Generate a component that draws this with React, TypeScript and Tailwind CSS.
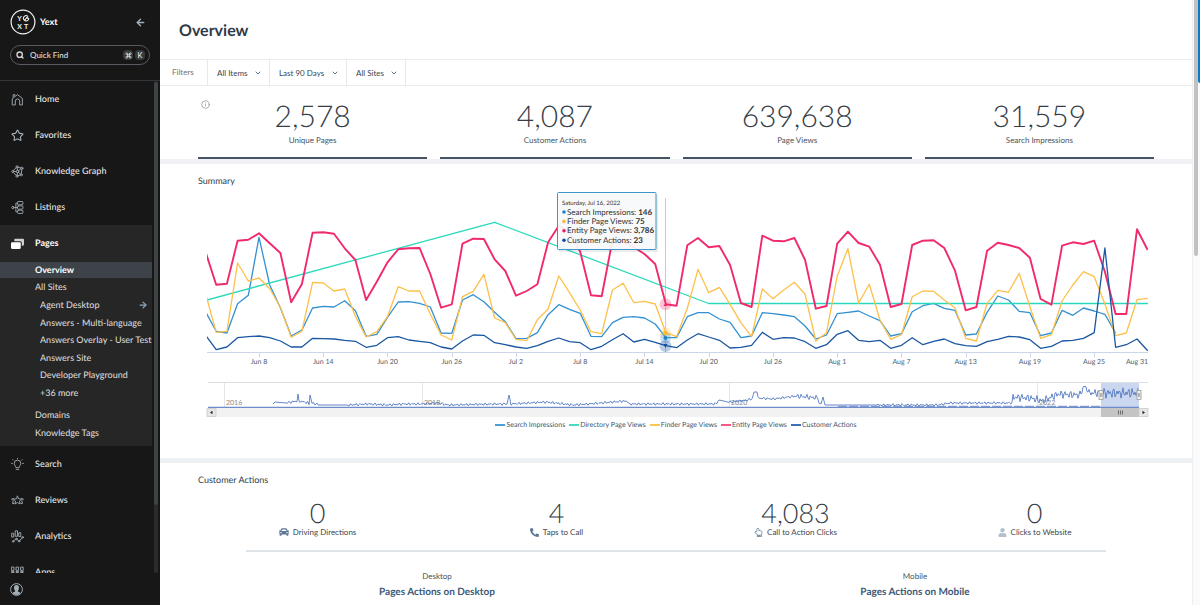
import type { ReactNode } from "react";
import {
  ArrowLeft,
  ArrowRight,
  ChevronDown,
  Command,
  Info,
  Search,
  Star,
} from "lucide-react";
import { FaCar, FaPhoneAlt, FaRegHandPointUp, FaUser } from "react-icons/fa";

const STEP = 10.707;
const START_X = 7.5;

// Values are distances from the top of the plot, in thirds of a unit
const entityViews = [
  245, 344, 341, 212, 209, 190, 220, 249, 397, 342, 188, 187, 191, 235, 270,
  390, 335, 277, 238, 235, 234, 312, 413, 403, 221, 206, 207, 268, 303, 377,
  363, 343, 217, 167, 185, 245, 376, 379, 212, 215, 232, 252, 282, 403, 407,
  226, 204, 232, 228, 285, 399, 411, 197, 212, 214, 204, 270, 416, 408, 221,
  185, 219, 230, 284, 411, 402, 225, 212, 211, 234, 302, 421, 411, 242, 218,
  225, 234, 263, 387, 404, 227, 217, 222, 212, 305, 432, 432, 178, 240,
];

const searchImpressions = [
  425, 484, 489, 401, 376, 202, 345, 413, 498, 480, 414, 409, 411, 392, 422,
  499, 493, 442, 396, 395, 400, 411, 489, 490, 390, 374, 395, 427, 455, 506,
  505, 488, 434, 404, 418, 430, 499, 500, 458, 442, 440, 444, 462, 503, 503,
  440, 428, 428, 447, 457, 503, 498, 428, 431, 435, 440, 468, 507, 495, 431,
  427, 423, 438, 452, 498, 491, 425, 407, 400, 415, 421, 495, 492, 427, 378,
  390, 424, 428, 497, 489, 421, 436, 414, 423, 433, 490,
];

const finderViews = [
  370, 487, 484, 279, 333, 324, 356, 412, 502, 484, 337, 339, 363, 357, 439,
  501, 485, 440, 350, 363, 363, 432, 495, 510, 380, 364, 313, 444, 458, 508,
  512, 449, 417, 318, 368, 420, 485, 491, 360, 340, 398, 394, 402, 488, 500,
  415, 298, 368, 352, 403, 458, 500, 357, 386, 360, 337, 373, 513, 488, 318,
  236, 399, 343, 450, 508, 494, 380, 363, 364, 390, 413, 505, 513, 400, 361,
  367, 310, 410, 505, 494, 393, 345, 305, 320, 402, 497, 489, 389, 385,
];

const customerActions = [
  495, 539, 531, 503, 500, 498, 503, 513, 531, 531, 505, 506, 507, 511, 514,
  532, 526, 503, 500, 510, 514, 518, 531, 537, 513, 495, 496, 518, 524, 531,
  535, 527, 514, 504, 515, 518, 539, 529, 509, 491, 516, 508, 517, 527, 533,
  510, 491, 501, 511, 534, 532, 526, 487, 508, 503, 504, 515, 535, 524, 493,
  482, 511, 515, 511, 535, 526, 503, 524, 514, 507, 521, 527, 529, 515, 508,
  499, 501, 509, 535, 529, 513, 511, 505, 488, 234, 532, 524, 507, 542,
];

const ticks = [
  "Jun 8", "Jun 14", "Jun 20", "Jun 26", "Jul 2", "Jul 8", "Jul 14",
  "Jul 20", "Jul 26", "Aug 1", "Aug 7", "Aug 13", "Aug 19", "Aug 25",
];

const legend = [
  { label: "Search Impressions", color: "bg-[#4a9fd8]" },
  { label: "Directory Page Views", color: "bg-[#4adcc0]" },
  { label: "Finder Page Views", color: "bg-[#fdc758]" },
  { label: "Entity Page Views", color: "bg-[#f5588a]" },
  { label: "Customer Actions", color: "bg-[#3a72b5]" },
];

const tooltipRows = [
  { label: "Search Impressions:", value: "146", color: "#1c83cf" },
  { label: "Finder Page Views:", value: "75", color: "#fdb92f" },
  { label: "Entity Page Views:", value: "3,786", color: "#f01f64" },
  { label: "Customer Actions:", value: "23", color: "#0f4fa0" },
];

const toPoints = (values: number[]) =>
  values
    .map((v, i) => `${(START_X + i * STEP).toFixed(1)},${(v / 3 - 20).toFixed(1)}`)
    .join(" ");

// [x, height above the baseline, jitter]
const history: [number, number, number][] = [
  [75, 2, 0], [77, 4, 0], [88, 3, 1], [99, 5, 1], [100, 12, 0], [101, 5, 1],
  [111, 3, 2], [112, 11, 0], [114, 3, 1], [122, 1, 0], [150, 1, 1],
  [170, 2, 1], [190, 1, 1], [205, 2, 1], [222, 2, 1], [240, 3, 1],
  [250, 1, 1], [300, 2, 1], [309, 2, 0], [311, 11, 0], [313, 2, 1],
  [348, 4, 1], [375, 1, 1], [390, 2, 1], [428, 5, 0], [432, 2, 1],
  [500, 2, 1], [518, 2, 1], [521, 6, 0], [530, 4, 1], [543, 5, 1],
  [554, 7, 1], [556, 14, 0], [559, 14, 0], [560, 8, 1], [575, 7, 1],
  [598, 10, 2], [620, 8, 1], [621, 3, 0], [623, 2, 0], [625, 9, 0],
  [627, 1, 0], [680, 1, 1], [740, 1, 1], [752, 3, 1], [780, 3, 1],
  [814, 3, 1], [815, 9, 3], [832, 8, 3], [845, 5, 3], [860, 12, 3],
  [882, 11, 3], [886, 20, 2], [892, 13, 3], [903, 13, 4], [941, 13, 4],
];

function historyPoints() {
  const points: string[] = [];
  let n = 0;
  for (let s = 0; s < history.length - 1; s++) {
    const [x0, h0, j0] = history[s];
    const [x1, h1] = history[s + 1];
    for (let x = x0; x < x1; x += 1) {
      const t = (x - x0) / (x1 - x0);
      const jitter = Math.sin(n * 2.05) * 0.8 + Math.sin(n * 1.31) * 0.6;
      const y = 216 - (h0 + (h1 - h0) * t) - jitter * j0;
      points.push(`${x},${Math.min(216, y).toFixed(1)}`);
      n++;
    }
  }
  return points.join(" ");
}

function NavIcon({ children }: { children: ReactNode }) {
  return (
    <svg
      viewBox="0 0 24 24"
      className="size-[13px] shrink-0 text-[#9aa3ab]"
      fill="none"
      stroke="currentColor"
      strokeWidth="1.8"
      strokeLinejoin="round"
      strokeLinecap="round"
      aria-hidden="true"
    >
      {children}
    </svg>
  );
}

function NavItem({ icon, label, active = false }: { icon: ReactNode; label: string; active?: boolean }) {
  return (
    <a
      href="#"
      className={`flex h-9 shrink-0 items-center gap-[11px] pl-[11px] text-[9px] ${
        active ? "font-bold text-white" : "font-semibold text-[#dedede]"
      }`}
    >
      {icon}
      {label}
    </a>
  );
}

function YextLogo() {
  return (
    <svg viewBox="0 0 26 26" className="size-[26px]" aria-label="Yext" role="img">
      <circle cx="13" cy="13" r="11.9" fill="none" stroke="#f2f2f2" strokeWidth="1.2" />
      <g fill="#f2f2f2" fontSize="7" fontWeight="700" textAnchor="middle">
        <text x="9.6" y="12">Y</text>
        <text x="16" y="19.500">T</text>
        <text x="9.6" y="19.500">X</text>
      </g>
      <path d="M14.300 11.300 18 7.400M18.800 9.300A2.700 2.700 0 1 1 17.600 7M18.800 9.300h-2" fill="none" stroke="#f2f2f2" strokeWidth="1.1" />
    </svg>
  );
}

function Sidebar() {
  return (
    <aside className="flex h-full w-40 shrink-0 flex-col bg-[#171717] text-[#d6d6d6]">
      <div className="flex h-[81px] shrink-0 flex-col border-b border-[#333638] px-[10px] pt-[9px]">
        <div className="flex items-center">
          <YextLogo />
          <span className="ml-1 text-[9px] font-bold text-white">Yext</span>
          <button type="button" aria-label="Collapse menu" className="mr-1 ml-auto text-[#9fb0bf]">
            <ArrowLeft size={11} strokeWidth={3} />
          </button>
        </div>
        <button
          type="button"
          className="mt-[10px] flex h-5 items-center rounded-full border border-[#565c61] pr-1 pl-[5px] text-[8px] font-semibold"
        >
          <Search size={8} strokeWidth={4} />
          <span className="ml-[6px]">Quick Find</span>
          <span className="ml-auto flex gap-[2px]">
            <kbd className="flex size-[10px] items-center justify-center rounded-sm bg-[#383a3c]">
              <Command size={7} strokeWidth={3} />
            </kbd>
            <kbd className="flex size-[10px] items-center justify-center rounded-sm bg-[#383a3c] font-[Lato] text-[7px] font-bold">
              K
            </kbd>
          </span>
        </button>
      </div>

      <div className="flex min-h-0 flex-1">
        <nav className="flex min-w-0 flex-1 flex-col overflow-hidden">
          <NavItem
            label="Home"
            icon={
              <NavIcon>
                <path d="M3 10 12 3l9 7v12h-5v-7a4 4 0 0 0-8 0v7H3zM4 8V3h3v2" />
              </NavIcon>
            }
          />
          <NavItem
            label="Favorites"
            icon={<Star className="size-[13px] shrink-0 text-[#a9b2ba]" strokeWidth={2} />}
          />
          <NavItem
            label="Knowledge Graph"
            icon={
              <NavIcon>
                <circle cx="3.5" cy="12" r="2" />
                <circle cx="12" cy="12" r="2.4" />
                <circle cx="11" cy="3.5" r="2" />
                <circle cx="20" cy="6" r="2" />
                <circle cx="19" cy="18" r="2" />
                <circle cx="11" cy="20.5" r="2" />
                <path d="M5.5 12h4M11.5 5.500 12 9.500M14 10.500 18 7M14 13.500 17.500 17M12 14.500 11.500 18.500M13 4l5 1.500M20 8l-1 8M17 18.500l-4 1.500M4.500 10 9.500 5M4.500 14l5 5" />
              </NavIcon>
            }
          />
          <NavItem
            label="Listings"
            icon={
              <NavIcon>
                <circle cx="3.500" cy="12" r="2.200" />
                <rect x="12" y="1" width="10" height="6" rx="1.500" />
                <rect x="12" y="9" width="10" height="6" rx="1.500" />
                <rect x="12" y="17" width="10" height="6" rx="1.500" />
                <path d="M6 12h6M12 4H9v16h3" />
              </NavIcon>
            }
          />

          <div className="h-[221px] shrink-0 bg-[#262626]">
            <NavItem
              label="Pages"
              active
              icon={
                <svg viewBox="0 0 24 24" className="size-[13px] shrink-0" aria-hidden="true">
                  <path d="M8 3h14a2 2 0 0 1 2 2v9a2 2 0 0 1-2 2h-2v-5a3 3 0 0 0-3-3H6V5a2 2 0 0 1 2-2z" fill="#cfcfcf" />
                  <rect x="0" y="9.500" width="18" height="12.500" rx="2" fill="#fff" />
                </svg>
              }
            />
            <div className="pt-px text-[9px] font-medium">
              <a href="#" className="flex h-4 items-center bg-[#3d4349] pl-[35px] font-bold text-white">
                Overview
              </a>
              <a href="#" className="flex h-[18px] items-center pl-[35px]">
                All Sites
              </a>
              <ul className="grid h-[105px] auto-rows-fr whitespace-nowrap">
                <li className="flex items-center justify-between pr-1 pl-10">
                  <a href="#">Agent Desktop</a>
                  <ArrowRight size={10} strokeWidth={3} className="text-[#8fa5b8]" />
                </li>
                <li className="flex items-center pl-10"><a href="#">Answers - Multi-language</a></li>
                <li className="flex items-center pl-10"><a href="#">Answers Overlay - User Test</a></li>
                <li className="flex items-center pl-10"><a href="#">Answers Site</a></li>
                <li className="flex items-center pl-10"><a href="#">Developer Playground</a></li>
                <li className="flex items-center pl-10"><a href="#">+36 more</a></li>
              </ul>
              <a href="#" className="mt-[5px] flex h-[18px] items-center pl-[35px]">
                Domains
              </a>
              <a href="#" className="flex h-[18px] items-center pl-[35px]">
                Knowledge Tags
              </a>
            </div>
          </div>

          <NavItem
            label="Search"
            icon={
              <NavIcon>
                <path d="M9 17c0-2-3-3-3-7a6 6 0 0 1 12 0c0 4-3 5-3 7zM9.500 21h5M12 .8v.5M1 10h1.500M21.500 10H23M3.500 3l1 1M20.500 3l-1 1" />
              </NavIcon>
            }
          />
          <NavItem
            label="Reviews"
            icon={
              <NavIcon>
                <path d="m12 4 2.300 5 5.200.6-3.900 3.600 1.100 5.300L12 15.800l-4.700 2.700 1.100-5.300-3.900-3.600 5.200-.6zM5 8.500l-4 .8 3 3-1 5.700 3-1M19 8.500l4 .8-3 3 1 5.700-3-1" />
              </NavIcon>
            }
          />
          <NavItem
            label="Analytics"
            icon={
              <NavIcon>
                <path d="M2 6h3v7H2zM8.500 1.500h3.500v10H8.500zM15 5h3v7h-3z" />
                <circle cx="4" cy="21" r="1.500" />
                <circle cx="10" cy="16.500" r="1.500" />
                <circle cx="15" cy="20.500" r="1.500" />
                <circle cx="21.500" cy="13.500" r="1.500" />
                <path d="m5 20 4-3M11 17.500l3 2.500M16 19.500l4.500-5" />
              </NavIcon>
            }
          />
          <NavItem
            label="Apps"
            icon={
              <NavIcon>
                <path d="M1.500 2h4v6h-4zM10 2h4v6h-4zM18.500 2h4v6h-4zM1.500 10h4v2h-4zM10 10h4v2h-4zM18.500 10h4v2h-4zM1.500 15h4v5h-4zM10 15h4v5h-4zM18.500 15h4v5h-4z" />
              </NavIcon>
            }
          />
        </nav>
        <div className="mr-[2px] ml-[2px] h-full w-1 rounded bg-[#292b2c]">
          <div className="mt-px h-[86%] w-full rounded bg-[#3e4345]" />
        </div>
      </div>

      <div className="flex h-8 shrink-0 items-center pl-[10px]">
        <button type="button" aria-label="Account">
          <svg viewBox="0 0 26 26" className="size-[13px]" aria-hidden="true">
            <circle cx="13" cy="13" r="11.800" fill="none" stroke="#a4b0b8" strokeWidth="2" />
            <path d="M13 4c3.500 0 5 2.500 5 5.500S16.500 15 15.500 16c0 1.500 4 2 5.500 4-2 2.500-5 4-8 4s-6-1.500-8-4c1.500-2 5.500-2.500 5.500-4C9.500 15 8 12.500 8 9.500S9.500 4 13 4z" fill="#a4b0b8" />
          </svg>
        </button>
      </div>
    </aside>
  );
}

function Filter({ label }: { label: string }) {
  return (
    <label className="flex items-center gap-[6px] border-r border-[#e6e8ea] pr-[7px] pl-[9px]">
      <select aria-label={label} className="appearance-none bg-transparent text-[8px] text-[#3a4550] outline-none">
        <option>{label}</option>
      </select>
      <ChevronDown size={8} strokeWidth={3} className="text-[#56748f]" />
    </label>
  );
}

function Kpi({ value, label }: { value: string; label: string }) {
  return (
    <div className="flex h-[73px] flex-col items-center border-b-2 border-[#445264]">
      <span className="mt-3 text-[30px] leading-9 font-light text-[#353d47]">{value}</span>
      <span className="text-[8px] leading-3 text-[#4b545e]">{label}</span>
    </div>
  );
}

function SummaryChart() {
  return (
    <svg
      viewBox="0 0 956 228"
      className="block h-auto w-full"
      role="img"
      aria-label="Summary of page activity, June to August 2022"
    >
      <clipPath id="plot">
        <rect x="9" y="0" width="941" height="170" />
      </clipPath>

      {/* Date axis */}
      <path d="M9 162.500H950" stroke="#ccd6eb" />
      {ticks.map((tick, i) => (
        <g key={tick}>
          <path d={`M${Math.round(61 + i * 6 * STEP)}.500 162v5`} stroke="#ccd6eb" />
          <text x={61 + i * 6 * STEP} y="174" fontSize="7" fill="#4d6070" textAnchor="middle">
            {tick}
          </text>
        </g>
      ))}
      <text x="950" y="174" fontSize="7" fill="#4d6070" textAnchor="end">Aug 31</text>

      <path d="M467.500 8V162" stroke="#c6cdd8" />

      <g clipPath="url(#plot)" fill="none" strokeLinejoin="round" strokeWidth="1.300">
        <polyline points={toPoints(searchImpressions)} stroke="#3390d3" />
        <path d="M9 110 296.500 32.300 510.700 113.500H950" stroke="#2ad9bd" />
        <polyline points={toPoints(finderViews)} stroke="#fdc04a" />
        <polyline points={toPoints(entityViews)} stroke="#f02a6c" strokeWidth="1.900" />
        <polyline points={toPoints(customerActions)} stroke="#1a57a3" />
      </g>

      {/* Markers of the hovered day */}
      <circle cx="467.500" cy="114.300" r="6" fill="#ee2a6b" opacity=".27" />
      <path d="m467.500 112.500 2 3.500h-4z" fill="#ee2a6b" />
      <circle cx="467.500" cy="143" r="5.500" fill="#fdc04a" opacity=".3" />
      <circle cx="467.500" cy="148" r="5.500" fill="#3390d3" opacity=".28" />
      <circle cx="467.500" cy="156" r="6" fill="#1a57a3" opacity=".3" />
      <rect x="465.500" y="141" width="4" height="4" fill="#fdb92f" />
      <circle cx="467.500" cy="148" r="2" fill="#1c83cf" />
      <path d="M465.500 154h4l-2 4z" fill="#0f4fa0" />

      {/* Tooltip */}
      <rect x="361" y="5" width="99" height="57" rx="1" fill="#000" opacity=".08" />
      <rect x="359.500" y="2.500" width="98.500" height="57" rx="1" fill="#f9fafb" fillOpacity=".93" stroke="#3c96cb" />
      <text x="364" y="15" fontSize="6" fill="#333">Saturday, Jul 16, 2022</text>
      {tooltipRows.map((row, i) => (
        <g key={row.label}>
          <circle cx="366" cy={22 + i * 9.400} r="1.800" fill={row.color} />
          <text x="369" y={24.500 + i * 9.400} fontSize="8" fill="#333">
            {row.label} <tspan fontWeight="700">{row.value}</tspan>
          </text>
        </g>
      ))}

      {/* Range navigator */}
      <path d="M10 192.500H950" stroke="#dcdfe2" />
      <path d="M26.500 193v24M224.500 193v24M531.500 193v24M839.500 193v24" stroke="#e6e6e6" />
      <g fontSize="7" fill="#888">
        <text x="28" y="215">2016</text>
        <text x="226" y="215">2018</text>
        <text x="533" y="215">2020</text>
        <text x="841" y="215">2022</text>
      </g>
      <rect x="903" y="193" width="38" height="24" fill="#cbd7ee" />
      <polyline points={historyPoints()} fill="none" stroke="#5379c4" strokeWidth=".9" />
      <path d="M10 217.300H941" stroke="#4a70bd" />
      <path d="M640 216.300H903" stroke="#4a70bd" strokeWidth="1" strokeDasharray="9 2" opacity=".8" />
      <g fill="#f2f2f2" stroke="#999" strokeWidth=".8">
        <rect x="901" y="200.500" width="4" height="9" />
        <rect x="939" y="200.500" width="4" height="9" />
        <path d="M902.500 203v4M903.700 203v4M940.500 203v4M941.700 203v4" />
      </g>
      <rect x="9" y="218" width="941" height="9" fill="#f2f2f2" />
      <rect x="903" y="218" width="38" height="9" fill="#c4c4c4" />
      <path d="M920.500 220.500v4M922.500 220.500v4M924.500 220.500v4" stroke="#555" strokeWidth=".8" />
      <g fill="#e6e6e6" stroke="#ccc" strokeWidth=".8">
        <rect x="9" y="218.400" width="9" height="8.200" />
        <rect x="941" y="218.400" width="9" height="8.200" />
      </g>
      <path d="m12 222.500 2.500-1.800v3.600zM947 222.500l-2.500-1.800v3.600z" fill="#222" />
    </svg>
  );
}

function ActionStat({ value, label, icon }: { value: string; label: string; icon: ReactNode }) {
  return (
    <div className="flex flex-col items-center">
      <span className="text-[27px] leading-8 font-light text-[#353d47]">{value}</span>
      <span className="-mt-px flex h-2 items-center gap-1 text-[8px] leading-2 text-[#3f464e]">
        {icon}
        {label}
      </span>
    </div>
  );
}

export default function App() {
  return (
    <div className="flex h-screen overflow-hidden bg-white font-[Lato,sans-serif] text-[#333c46] [text-rendering:geometricPrecision]">
      <Sidebar />

      <main className="min-w-0 flex-1 overflow-hidden border-r border-[#eeeff0]">
        <header className="flex h-[59px] items-center pt-[2px] pl-[19px]">
          <h1 className="text-base font-bold text-[#2f3b48]">Overview</h1>
        </header>

        <div className="flex h-[27px] border-y border-[#e9ebed] text-[8px]">
          <span className="flex w-12 items-center border-r border-[#e6e8ea] pb-px pl-3 text-[#6d757d]">
            Filters
          </span>
          <Filter label="All Items" />
          <Filter label="Last 90 Days" />
          <Filter label="All Sites" />
        </div>

        <section className="relative grid grid-cols-4 gap-[13px] border-b-[5px] border-[#eff1f4] px-[38px]">
          <Info size={9} strokeWidth={2} className="absolute top-[14px] left-[41px] text-[#8a939b]" />
          <Kpi value="2,578" label="Unique Pages" />
          <Kpi value="4,087" label="Customer Actions" />
          <Kpi value="639,638" label="Page Views" />
          <Kpi value="31,559" label="Search Impressions" />
        </section>

        <section className="border-b-[5px] border-[#eef1f4] px-[38px] pt-[9px] pb-[28px]">
          <h2 className="mb-px text-[9px] leading-4">Summary</h2>
          <SummaryChart />
          <ul className="mt-[2px] flex justify-center gap-1 text-[7px] leading-[10px] text-[#3e576f]">
            {legend.map((item) => (
              <li key={item.label} className="flex items-center gap-px">
                <span className={`h-[2px] w-[10px] ${item.color}`} />
                {item.label}
              </li>
            ))}
          </ul>
        </section>

        <section className="px-[38px] pt-[9px]">
          <h2 className="text-[9px] leading-4">Customer Actions</h2>
          <div className="mt-[9px] grid grid-cols-4">
            <ActionStat
              value="0"
              label="Driving Directions"
              icon={<FaCar size={10} className="text-[#5b7795]" />}
            />
            <ActionStat
              value="4"
              label="Taps to Call"
              icon={<FaPhoneAlt size={9} className="-scale-x-100 rotate-90 text-[#5b7795]" />}
            />
            <ActionStat
              value="4,083"
              label="Call to Action Clicks"
              icon={<FaRegHandPointUp size={9} className="text-[#7d94a8]" />}
            />
            <ActionStat
              value="0"
              label="Clicks to Website"
              icon={<FaUser size={9} className="text-[#b3c0cc]" />}
            />
          </div>
          <hr className="mx-12 mt-[14px] border-t-2 border-[#dfe4e8]" />
          <div className="mt-[19px] grid grid-cols-2 text-center">
            <div>
              <p className="text-[8px] leading-[10px] text-[#4b545e]">Desktop</p>
              <h3 className="mt-[3px] text-[10px] leading-4 font-bold text-[#3c5877]">Pages Actions on Desktop</h3>
            </div>
            <div>
              <p className="text-[8px] leading-[10px] text-[#4b545e]">Mobile</p>
              <h3 className="mt-[3px] text-[10px] leading-4 font-bold text-[#3c5877]">Pages Actions on Mobile</h3>
            </div>
          </div>
        </section>
      </main>

      {/* Page scroll bar with the edge tab of the help panel */}
      <div className="flex w-[7px] shrink-0 justify-end bg-[#fafafa]">
        <div className="h-64 w-1 rounded-b bg-[#c1c1c1]" />
        <div className="h-[83px] w-[2px] rounded-bl bg-[#0b78c8]" />
      </div>
    </div>
  );
}
